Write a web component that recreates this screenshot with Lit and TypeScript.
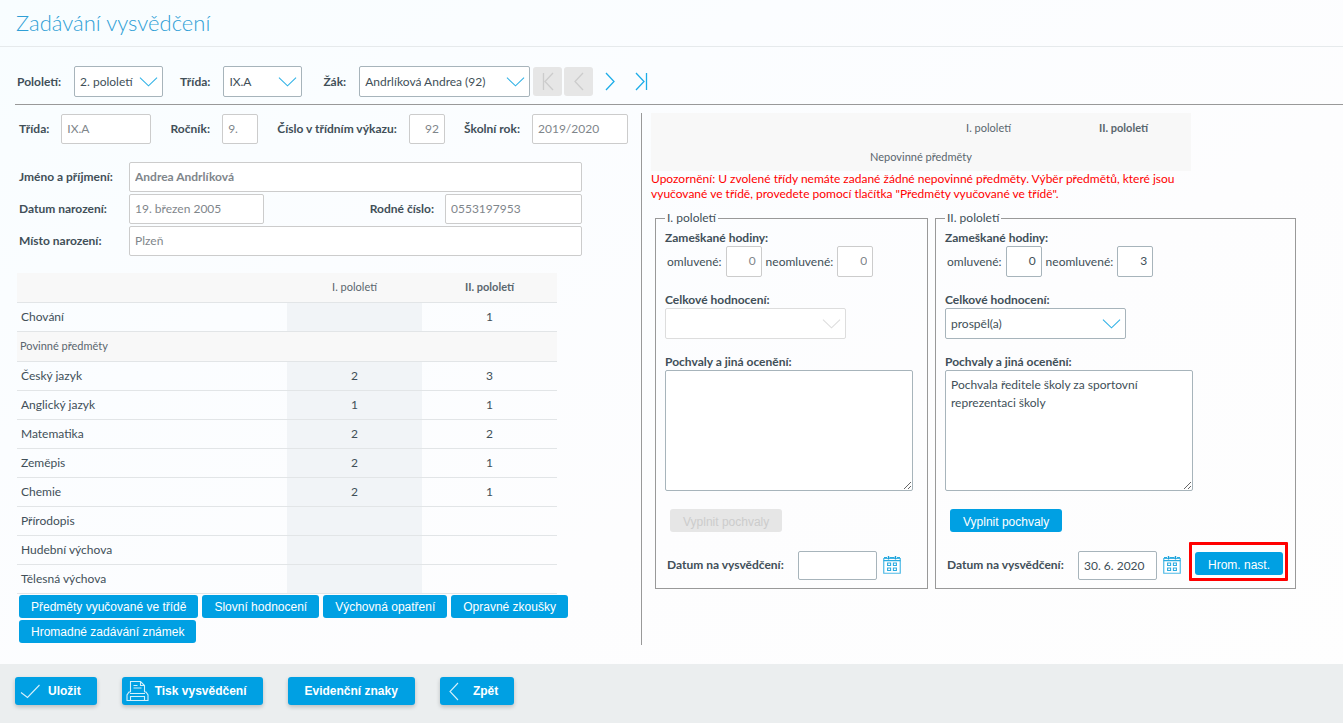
import { LitElement, html, css, svg, nothing } from "lit";
import { customElement } from "lit/decorators.js";
import { classMap } from "lit/directives/class-map.js";

const chevron = html`<svg class="chevron" viewBox="0 0 20 12" aria-hidden="true"><path d="M1 1.5 L10 10 L19 1.5" /></svg>`;

const calendar = html`<svg class="calendar" viewBox="0 0 18 18" aria-hidden="true">
  <path d="M.75 2.5h16.5v14.75H.75z" fill="#fff" stroke="#4db9e6" stroke-width="1.2" />
  <path d="M.5 4.7h17M1 1.7h3M6.5 1.7h5M14 1.7h3" stroke="#2aabe0" stroke-width="1.2" />
  <path d="M5.5 0v3.5M12.5 0v3.5" stroke="#1a9fd8" stroke-width="1.4" />
  <path d="M4.6 7h3v2.500h-3zM10.4 7h3v2.500h-3zM4.6 12h3v2.500h-3zM10.4 12h3v2.500h-3z" fill="none" stroke="#2aabe0" stroke-width="1.1" />
</svg>`;

const navIcons = {
  first: svg`<path d="M2.5 1v17M12 1L4 9.5 12 18" />`,
  prev: svg`<path d="M11 1L3 9.5 11 18" />`,
  next: svg`<path d="M3 1l8 8.5L3 18" />`,
  last: svg`<path d="M2 1l8 8.5L2 18M12.5 1v17" />`,
};

const subjects: [string, string, string][] = [
  ["Český jazyk", "2", "3"],
  ["Anglický jazyk", "1", "1"],
  ["Matematika", "2", "2"],
  ["Zeměpis", "2", "1"],
  ["Chemie", "2", "1"],
  ["Přírodopis", "", ""],
  ["Hudební výchova", "", ""],
  ["Tělesná výchova", "", ""],
];

interface Term {
  id: string;
  title: string;
  locked: boolean;
  excused: string;
  unexcused: string;
  result: string;
  praise: string;
  date: string;
}

const terms: Term[] = [
  { id: "t1", title: "I. pololetí", locked: true, excused: "0", unexcused: "0", result: "", praise: "", date: "" },
  {
    id: "t2",
    title: "II. pololetí",
    locked: false,
    excused: "0",
    unexcused: "3",
    result: "prospěl(a)",
    praise: "Pochvala ředitele školy za sportovní reprezentaci školy",
    date: "30. 6. 2020",
  },
];

@customElement("app-root")
export class AppRoot extends LitElement {
  static styles = css`
    :host {
      display: flex;
      flex-direction: column;
      min-height: 100vh;
      box-sizing: border-box;
      color: #414f58;
      background: linear-gradient(150deg, #f8fdff 0%, #fbfdff 30%, #fdfdfe 60%, #fefefe 100%);
      font-family: Lato, "Noto Sans", sans-serif;
      font-size: 12px;
      line-height: 16px;
    }
    *, *::before, *::after { box-sizing: border-box; }
    input, select, textarea {
      font: inherit;
      color: #414f58;
      background: #fff;
      border: 1px solid #a7b4bb;
      border-radius: 2px;
      margin: 0;
      padding: 0 5px;
    }
    input { height: 30px; min-width: 0; padding-bottom: 2px; }
    input:disabled { color: #7f868b; border-color: #ccc; }
    select {
      appearance: none;
      height: 31px;
      width: 100%;
      grid-area: 1 / 1;
    }
    select:disabled { border-color: #ddd; opacity: 1; }
    .num { width: 36px; text-align: right; }
    .year { width: 36px; }
    .strong { font-weight: 700; }
    .select { display: grid; align-items: center; }
    .chevron {
      grid-area: 1 / 1;
      justify-self: end;
      margin-right: 5px;
      width: 19px;
      height: 12px;
      pointer-events: none;
      fill: none;
      stroke: #2fb1e6;
      stroke-width: 1.1;
    }
    select:disabled + .chevron { stroke: #ddd; }

    .header {
      height: 47px;
      padding: 8px 16px 0;
      border-bottom: 1px solid #e6eaec;
    }
    .title {
      margin: 0;
      font-size: 22px;
      line-height: 30px;
      font-weight: 300;
      color: #2f9fd6;
    }
    .toolbar {
      display: flex;
      align-items: center;
      margin-left: 15px;
      padding: 19px 0 7px 2px;
      border-bottom: 1px solid #999;
    }
    .field { display: flex; align-items: center; }
    .toolbar .field { gap: 13px; margin-right: 17px; }
    .toolbar .field.last { margin: 0 3px 0 4px; }
    .half { width: 89px; }
    .class { width: 79px; }
    .pupil { width: 171px; }
    .pager { display: flex; gap: 2px; }
    .nav {
      width: 29px;
      height: 29px;
      padding: 0;
      border: 0;
      border-radius: 3px;
      background: none;
      display: grid;
      place-items: center;
    }
    .nav svg { width: 14px; height: 19px; fill: none; stroke: #1dade8; stroke-width: 1.3; }
    .nav:disabled { background: #e6e6e6; }
    .nav:disabled svg { stroke: #ccc; }

    .content {
      flex: 1;
      display: grid;
      grid-template-columns: 627fr 701fr;
      align-items: stretch;
      margin-left: 15px;
      padding: 8px 0 19px;
    }
    .left { border-right: 1px solid #999; padding: 1px 13px 2px 2px; }
    .identity { display: flex; justify-content: space-between; padding-left: 2px; }
    .identity .field { gap: 12px; }
    .w90 { width: 90px; }
    .w96 { width: 96px; }
    .person {
      display: grid;
      grid-template-columns: 110px 135px 1fr 137px;
      align-items: center;
      row-gap: 2px;
      max-width: 565px;
      margin-top: 18px;
      padding-left: 2px;
    }
    .wide { grid-column: 2 / -1; }
    .person .name { font-weight: 700; }
    .right-label { text-align: right; padding-right: 11px; }

    .grades {
      width: 540px;
      margin-top: 17px;
      border-collapse: collapse;
      table-layout: fixed;
    }
    .grades th, .grades td {
      height: 29px;
      padding: 0 4px;
      border-bottom: 1px solid #e2e5e7;
      text-align: center;
      font-weight: 400;
    }
    .grades .section th { height: 30px; }
    .grades thead th, .grades .section th { background: #f8f8f8; color: #5a666e; font-size: 11px; }
    .grades .section th { padding-left: 3px; }
    .grades thead .current { font-weight: 700; }
    .grades tbody th { text-align: left; }
    .grades .past { background: #f1f4f7; }
    .subject { width: 270px; }

    .btn {
      height: 23px;
      padding: 2px 12px 0;
      border: 0;
      border-radius: 3px;
      background: #00a0e3;
      color: #fff;
      font: 12px/20px "Liberation Sans", Arial, sans-serif;
      white-space: nowrap;
    }
    .btn:disabled { background: #e6e6e6; color: #ccc; }
    .actions { display: flex; flex-wrap: wrap; gap: 2px 4px; padding: 1px 0 0 2px; }

    .right { padding-left: 9px; }
    .optional {
      width: 540px;
      border-collapse: collapse;
      table-layout: fixed;
      background: #f8f8f8;
      color: #5a666e;
    }
    .optional th { height: 29px; padding: 0; font-weight: 400; font-size: 11px; }
    .optional .current { font-weight: 700; }
    .warning {
      max-width: 540px;
      margin: 0;
      color: #f00;
      line-height: 15px;
    }
    .terms { display: flex; gap: 7px; margin-top: 9px; padding-left: 4px; }
    .term {
      margin: 0;
      min-width: 0;
      width: 273px;
      padding: 4px 9px 0;
      border: 1px solid #999;
    }
    .term.open { width: 361px; }
    .term legend { padding: 0 2px; line-height: 16px; }
    .absence { display: flex; align-items: center; gap: 4px; padding-left: 2px; }
    .absence input { height: 31px; }
    .group-label { display: block; font-weight: 700; }
    .block { margin-top: 15px; }
    .result { width: 181px; }
    .praise {
      display: block;
      width: 248px;
      height: 121px;
      padding: 5px;
      line-height: 18px;
      resize: both;
    }
    .term .btn { padding: 2px 13px 0; }
    .fill { margin: 18px 5px 0; }
    .date-row { display: flex; align-items: center; height: 46px; margin-top: 10px; padding-left: 2px; }
    .date-row label { flex: none; width: 131px; }
    .date { flex: none; width: 79px; height: 29px; padding-bottom: 0; }
    .pick { border: 0; background: none; padding: 0; margin-left: 6px; display: grid; }
    .calendar { width: 18px; height: 18px; }
    .highlight {
      align-self: flex-start;
      margin-left: 8px;
      padding: 7px 2px 3px 3px;
      border: 3px solid #f00;
      border-radius: 1px;
      display: flex;
    }

    .footer {
      display: flex;
      gap: 25px;
      height: 59px;
      padding: 13px 15px;
      background: #ebeeef;
    }
    .main {
      display: flex;
      align-items: center;
      height: 28px;
      padding: 0 17px;
      font-weight: 700;
      box-shadow: 0 2px 4px rgba(0, 0, 0, 0.2);
    }
    .main.icon { padding: 0 16px 0 4px; gap: 6px; }
    .main svg { width: 23px; height: 22px; fill: none; stroke: #d5f0fb; stroke-width: 1.1; }
  `;

  private select(id: string, width: string, value: string, disabled = false) {
    return html`<span class="select ${width}">
      <select id=${id} ?disabled=${disabled}><option>${value}</option></select>${chevron}
    </span>`;
  }

  private nav(label: string, icon: unknown, disabled = false) {
    return html`<button class="nav" aria-label=${label} ?disabled=${disabled}>
      <svg viewBox="0 0 14 19" aria-hidden="true">${icon}</svg>
    </button>`;
  }

  private term(t: Term) {
    return html`<fieldset class=${classMap({ term: true, open: !t.locked })}>
      <legend>${t.title}</legend>
      <span class="group-label">Zameškané hodiny:</span>
      <div class="absence">
        <label for="${t.id}-ex">omluvené:</label>
        <input class="num" id="${t.id}-ex" .value=${t.excused} ?disabled=${t.locked} />
        <label for="${t.id}-un">neomluvené:</label>
        <input class="num" id="${t.id}-un" .value=${t.unexcused} ?disabled=${t.locked} />
      </div>
      <label class="group-label block" for="${t.id}-result">Celkové hodnocení:</label>
      ${this.select(`${t.id}-result`, "result", t.result, t.locked)}
      <label class="group-label block" for="${t.id}-praise">Pochvaly a jiná ocenění:</label>
      <textarea class="praise" id="${t.id}-praise" .value=${t.praise}></textarea>
      <button class="btn fill" ?disabled=${t.locked}>Vyplnit pochvaly</button>
      <div class="date-row">
        <label class="strong" for="${t.id}-date">Datum na vysvědčení:</label>
        <input class="date" id="${t.id}-date" .value=${t.date} />
        <button class="pick" aria-label="Kalendář">${calendar}</button>
        ${t.locked ? nothing : html`<span class="highlight"><button class="btn">Hrom. nast.</button></span>`}
      </div>
    </fieldset>`;
  }

  render() {
    return html`
      <header class="header"><h1 class="title">Zadávání vysvědčení</h1></header>
      <div class="toolbar">
        <div class="field"><label class="strong" for="half">Pololetí:</label>${this.select("half", "half", "2. pololetí")}</div>
        <div class="field"><label class="strong" for="class">Třída:</label>${this.select("class", "class", "IX.A")}</div>
        <div class="field last"><label class="strong" for="pupil">Žák:</label>${this.select("pupil", "pupil", "Andrlíková Andrea (92)")}</div>
        <div class="pager">
          ${this.nav("První", navIcons.first, true)} ${this.nav("Předchozí", navIcons.prev, true)}
          ${this.nav("Další", navIcons.next)} ${this.nav("Poslední", navIcons.last)}
        </div>
      </div>
      <main class="content">
        <section class="left">
          <div class="identity">
            <div class="field"><label class="strong" for="p-class">Třída:</label><input class="w90" id="p-class" value="IX.A" disabled /></div>
            <div class="field"><label class="strong" for="p-year">Ročník:</label><input class="year" id="p-year" value="9." disabled /></div>
            <div class="field"><label class="strong" for="p-no">Číslo v třídním výkazu:</label><input class="num" id="p-no" value="92" disabled /></div>
            <div class="field"><label class="strong" for="p-school">Školní rok:</label><input class="w96" id="p-school" value="2019/2020" disabled /></div>
          </div>
          <div class="person">
            <label class="strong" for="p-name">Jméno a příjmení:</label>
            <input class="wide name" id="p-name" value="Andrea Andrlíková" disabled />
            <label class="strong" for="p-born">Datum narození:</label>
            <input id="p-born" value="19. březen 2005" disabled />
            <label class="strong right-label" for="p-id">Rodné číslo:</label>
            <input id="p-id" value="0553197953" disabled />
            <label class="strong" for="p-place">Místo narození:</label>
            <input class="wide" id="p-place" value="Plzeň" disabled />
          </div>
          <table class="grades">
            <thead>
              <tr><th class="subject"></th><th>I. pololetí</th><th class="current">II. pololetí</th></tr>
            </thead>
            <tbody>
              <tr><th>Chování</th><td class="past"></td><td>1</td></tr>
              <tr class="section"><th colspan="3">Povinné předměty</th></tr>
              ${subjects.map(([name, a, b]) => html`<tr><th>${name}</th><td class="past">${a}</td><td>${b}</td></tr>`)}
            </tbody>
          </table>
          <div class="actions">
            <button class="btn">Předměty vyučované ve třídě</button>
            <button class="btn">Slovní hodnocení</button>
            <button class="btn">Výchovná opatření</button>
            <button class="btn">Opravné zkoušky</button>
            <button class="btn">Hromadné zadávání známek</button>
          </div>
        </section>
        <section class="right">
          <table class="optional">
            <thead>
              <tr><th class="subject"></th><th>I. pololetí</th><th class="current">II. pololetí</th></tr>
              <tr><th colspan="3">Nepovinné předměty</th></tr>
            </thead>
          </table>
          <p class="warning">
            Upozornění: U zvolené třídy nemáte zadané žádné nepovinné předměty. Výběr předmětů, které jsou vyučované ve
            třídě, provedete pomocí tlačítka "Předměty vyučované ve třídě".
          </p>
          <div class="terms">${terms.map((t) => this.term(t))}</div>
        </section>
      </main>
      <footer class="footer">
        <button class="btn main icon">
          <svg viewBox="0 0 23 22" aria-hidden="true"><path d="M2 12.5L8.500 17.500 20.500 5" /></svg>Uložit
        </button>
        <button class="btn main icon">
          <svg viewBox="0 0 23 22" aria-hidden="true">
            <path d="M4.5 12V1.5h10l4 4V12M14.5 1.5v4h4M7.5 5.5h4M7.5 8h8M4.5 12H3l-2 3v5.500h21V15l-2-3h-1.500M4 13.500h15M4.500 20v-3.500h14V20" />
          </svg>Tisk vysvědčení
        </button>
        <button class="btn main">Evidenční znaky</button>
        <button class="btn main icon">
          <svg viewBox="0 0 23 22" aria-hidden="true"><path d="M14 3L6 11.500 14 20" /></svg>Zpět
        </button>
      </footer>
    `;
  }
}
